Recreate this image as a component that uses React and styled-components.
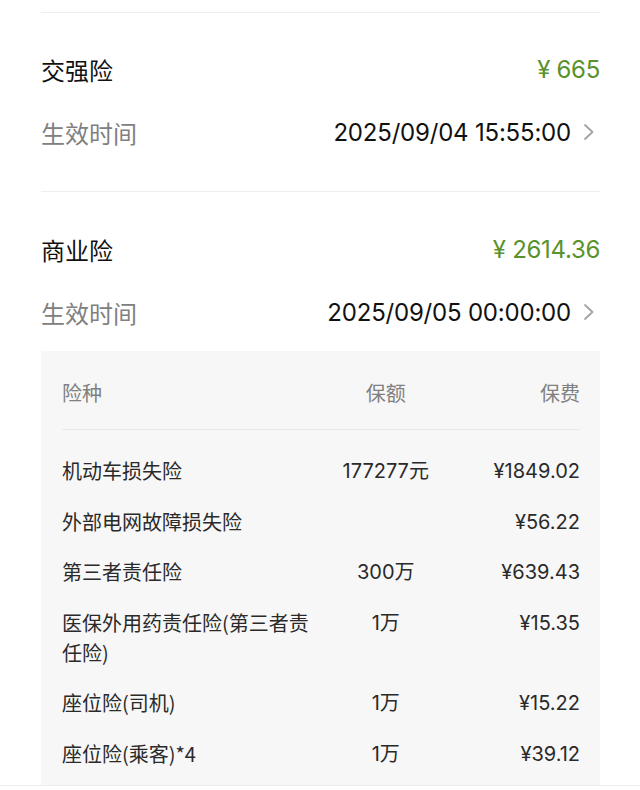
import React from "react";
import styled, { createGlobalStyle } from "styled-components";

const GlobalStyle = createGlobalStyle`
  html, body { margin: 0; padding: 0; background: #ffffff; }
  body {
    font-family: "Inter", "Noto Sans CJK SC", sans-serif;
    -webkit-font-smoothing: antialiased;
  }
`;

const Page = styled.div`
  width: 640px;
  height: 790px;
  overflow: hidden;
  background: #fff;
  padding-top: 12px;
  box-sizing: border-box;
`;

const Content = styled.div`
  padding: 0 40px 0 41px;
`;

const Divider = styled.div`
  height: 1px;
  background: #efefef;
`;

const Section = styled.section`
  padding: ${(p) => (p.$last ? "37px 0 19px" : "36px 0 39px")};
  display: flex;
  flex-direction: column;
  gap: 23px;
`;

const Row = styled.div`
  display: flex;
  align-items: center;
  justify-content: space-between;
  height: 40px;
  font-size: 24px;
`;

const Title = styled.span`
  color: #111;
  font-family: "Noto Sans CJK SC", sans-serif;
`;

const Label = styled.span`
  color: #808080;
  font-family: "Noto Sans CJK SC", sans-serif;
`;

const Amount = styled.span`
  color: #5a922c;
  letter-spacing: -0.3px;
`;

const Value = styled.span`
  display: flex;
  align-items: center;
  gap: 11px;
  margin-right: 3px;
  color: #111;
  letter-spacing: -0.2px;
`;

const Chevron = () => (
  <svg width="15" height="18" viewBox="0 0 15 18" aria-hidden="true">
    <polyline
      points="3,2 10.5,9 3,16"
      fill="none"
      stroke="#a3a3a3"
      strokeWidth="1.8"
      strokeLinecap="round"
      strokeLinejoin="round"
    />
  </svg>
);

const Table = styled.div`
  background: #f7f7f7;
  padding: 22px 20px 16px 21px;
  font-size: 20px;
`;

const Grid = styled.div`
  display: grid;
  grid-template-columns: 50% 25% 25%;
  align-items: start;
  line-height: 30px;
`;

const HeadRow = styled(Grid)`
  height: 40px;
  align-items: center;
  color: #808080;
  font-family: "Noto Sans CJK SC", sans-serif;
  padding-bottom: 16px;
  border-bottom: 1px solid #e9e9e9;
`;

const Body = styled.div`
  display: flex;
  flex-direction: column;
  gap: 20.5px;
  padding-top: 26px;
`;

const Cell = styled.div`
  color: #2a2a2a;
  text-align: ${(p) => p.$align || "left"};
  font-family: ${(p) =>
    p.$num ? `"Inter", "Noto Sans CJK SC", sans-serif` : `"Noto Sans CJK SC", "Inter", sans-serif`};
  white-space: ${(p) => (p.$num ? "nowrap" : "normal")};
  padding-right: ${(p) => (p.$align ? "0" : "6px")};
`;

const HeadCell = styled.div`
  text-align: ${(p) => p.$align || "left"};
`;

const BottomBar = styled.div`
  height: 10px;
  border-top: 1px solid #ececec;
  background: #fff;
`;

const rows = [
  { name: "机动车损失险", cover: "177277元", fee: "¥1849.02" },
  { name: "外部电网故障损失险", cover: "", fee: "¥56.22" },
  { name: "第三者责任险", cover: "300万", fee: "¥639.43" },
  { name: "医保外用药责任险(第三者责任险)", cover: "1万", fee: "¥15.35" },
  { name: "座位险(司机)", cover: "1万", fee: "¥15.22" },
  { name: "座位险(乘客)*4", cover: "1万", fee: "¥39.12" },
];

export default function App() {
  return (
    <>
      <GlobalStyle />
      <Page>
        <Content>
          <Divider />
          <Section>
            <Row>
              <Title>交强险</Title>
              <Amount>¥ 665</Amount>
            </Row>
            <Row>
              <Label>生效时间</Label>
              <Value>
                2025/09/04 15:55:00
                <Chevron />
              </Value>
            </Row>
          </Section>
          <Divider />
          <Section $last>
            <Row>
              <Title>商业险</Title>
              <Amount>¥ 2614.36</Amount>
            </Row>
            <Row>
              <Label>生效时间</Label>
              <Value>
                2025/09/05 00:00:00
                <Chevron />
              </Value>
            </Row>
          </Section>
          <Table>
            <HeadRow>
              <HeadCell>险种</HeadCell>
              <HeadCell $align="center">保额</HeadCell>
              <HeadCell $align="right">保费</HeadCell>
            </HeadRow>
            <Body>
              {rows.map((r) => (
                <Grid key={r.name}>
                  <Cell>{r.name}</Cell>
                  <Cell $align="center" $num>
                    {r.cover}
                  </Cell>
                  <Cell $align="right" $num>
                    {r.fee}
                  </Cell>
                </Grid>
              ))}
            </Body>
          </Table>
        </Content>
        <BottomBar />
      </Page>
    </>
  );
}
